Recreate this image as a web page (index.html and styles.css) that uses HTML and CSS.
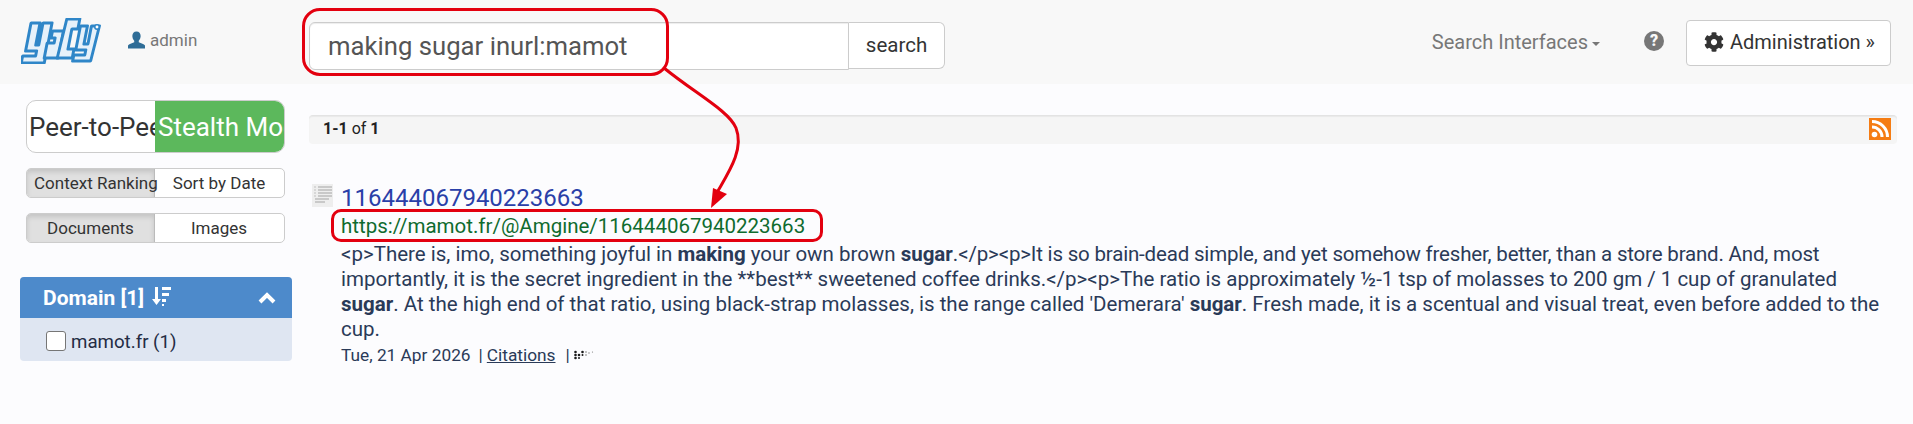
FILE: index.html
```html
<!DOCTYPE html>
<html lang="en">
<head>
<meta charset="utf-8">
<title>YaCy search</title>
<link rel="stylesheet" href="styles.css">
</head>
<body>
<header class="nav">
  <svg class="logo" viewBox="0 0 80 46" width="80" height="46">
    <g transform="skewX(-11) translate(9 0)" fill="#e6f1fa" stroke="#2f86c8" stroke-width="3" stroke-linejoin="round">
      <path d="M2 5h9v22h3V5h9v40H0v-7h13v-5H2z"/>
      <path d="M25 13h11v27H22V25h7v-5h-4z"/>
      <path d="M37 1h13v10h-6v20h6v9H35z"/>
      <path d="M52 8h7v18h4V8h8l-2 35H51v-6h11v-5H52z"/>
    </g>
    <circle cx="76" cy="9" r="2.200" fill="#fff" stroke="#2f86c8" stroke-width="1.500"/>
  </svg>
  <div class="user">
    <svg class="user-icon" viewBox="0 0 18 18" width="17" height="18"><path d="M9 0c2.800 0 4.400 2 4.400 4.800 0 2-.9 3.800-2 4.900v1.600c2.400.9 5.800 2 6.600 3.500V18H0v-3.200c.8-1.500 4.200-2.600 6.600-3.500V9.700c-1.100-1.100-2-2.900-2-4.900C4.600 2 6.200 0 9 0z"/></svg>
    <span>admin</span>
  </div>
  <form class="search">
    <input class="search-input" type="text" value="making sugar inurl:mamot">
    <button class="search-btn" type="button">search</button>
  </form>
  <div class="nav-right">
    <span class="interfaces">Search Interfaces<i class="caret"></i></span>
    <span class="help">?</span>
    <button class="admin-btn" type="button">
      <svg class="gear" viewBox="0 0 512 512" width="20" height="20"><path d="M487.400 315.700l-42.600-24.600c4.300-23.200 4.300-47 0-70.200l42.600-24.600c4.900-2.800 7.100-8.600 5.500-14-11.100-35.600-30-67.800-54.700-94.600-3.800-4.100-10-5.100-14.800-2.300L380.800 110c-17.900-15.400-38.500-27.300-60.800-35.100V25.800c0-5.600-3.900-10.500-9.400-11.700-36.700-8.200-74.300-7.800-109.200 0-5.500 1.200-9.400 6.100-9.400 11.700V75c-22.200 7.900-42.800 19.800-60.800 35.100L88.700 85.500c-4.900-2.800-11-1.900-14.800 2.300-24.700 26.700-43.600 58.900-54.700 94.600-1.700 5.400.6 11.200 5.500 14L67.300 221c-4.300 23.200-4.300 47 0 70.200l-42.600 24.600c-4.900 2.800-7.100 8.600-5.500 14 11.100 35.600 30 67.800 54.700 94.600 3.800 4.100 10 5.100 14.800 2.300l42.600-24.600c17.900 15.400 38.500 27.300 60.800 35.100v49.200c0 5.600 3.900 10.500 9.400 11.700 36.700 8.200 74.300 7.800 109.200 0 5.500-1.200 9.400-6.100 9.400-11.700v-49.200c22.200-7.900 42.800-19.800 60.800-35.100l42.600 24.600c4.900 2.800 11 1.900 14.800-2.300 24.700-26.700 43.600-58.900 54.700-94.600 1.500-5.500-.7-11.300-5.600-14.100zM256 336c-44.100 0-80-35.900-80-80s35.900-80 80-80 80 35.900 80 80-35.900 80-80 80z"/></svg>
      Administration »
    </button>
  </div>
</header>

<div class="page">
  <aside class="side">
    <div class="btn-group big">
      <span class="seg">Peer-to-Peer</span>
      <span class="seg green">Stealth Mode</span>
    </div>
    <div class="btn-group small">
      <span class="seg active ctx">Context Ranking</span>
      <span class="seg">Sort by Date</span>
    </div>
    <div class="btn-group small">
      <span class="seg active">Documents</span>
      <span class="seg">Images</span>
    </div>
    <section class="panel">
      <div class="panel-head">
        <span class="panel-title">Domain [1]</span>
        <svg class="sort" viewBox="0 0 20 20" width="20" height="20"><path d="M4 1h3v12h3l-4.500 6L1 13h3z"/><path d="M11 1h9v3h-9zM11 7h7v3h-7zM11 13h4v3h-4zM11 18h2v2h-2z"/></svg>
        <svg class="chev" viewBox="0 0 18 12" width="18" height="12"><path d="M2 10l7-7 7 7" fill="none" stroke="#fff" stroke-width="4"/></svg>
      </div>
      <label class="panel-body"><input class="check" type="checkbox"><span>mamot.fr (1)</span></label>
    </section>
  </aside>

  <main class="main">
    <div class="well">
      <span><b>1-1</b> of <b>1</b></span>
      <svg class="rss" viewBox="0 0 22 22" width="22" height="22"><rect width="22" height="22" fill="#f57c13"/><circle cx="5.500" cy="16.500" r="2.800" fill="#fff"/><path d="M3 9a10 10 0 0 1 10 10M3 3.500A15.500 15.500 0 0 1 18.500 19" fill="none" stroke="#fff" stroke-width="3"/></svg>
    </div>
    <article class="result">
      <svg class="fav" viewBox="0 0 21 23" width="21" height="23"><rect width="21" height="23" fill="#eeeeee"/><path d="M6 3h14M6 6h14M6 9h14M6 12h14M3 15h14M3 18h10" stroke="#bdbdbd" stroke-width="1.300"/><path d="M2 3h2M2 6h2M2 9h2M2 12h2" stroke="#d0d0d0" stroke-width="1.300"/></svg>
      <div class="result-body">
        <a class="title" href="#">116444067940223663</a>
        <div class="url">https://mamot.fr/@Amgine/116444067940223663</div>
        <p class="snippet">&lt;p&gt;There is, imo, something joyful in <b>making</b> your own brown <b>sugar</b>.<span class="tight">&lt;/p&gt;&lt;p&gt;It is so brain-dead simple, and yet somehow fresher, better, than a store brand. And, most</span><br>importantly, it is the secret ingredient in the **best** sweetened coffee drinks.&lt;/p&gt;&lt;p&gt;The ratio is approximately ½-1 tsp of molasses to 200 gm / 1 cup of granulated<br><b>sugar</b>. At the high end of that ratio, using black-strap molasses, is the range called 'Demerara' <b>sugar</b>. Fresh made, it is a scentual and visual treat, even before added to the<br>cup.</p>
        <div class="meta">
          <span>Tue, 21 Apr 2026</span>
          <span class="sep">|</span><a class="cit" href="#">Citations</a>
          <span class="sep2">|</span>
          <svg class="dots" viewBox="0 0 20 10" width="20" height="10"><g fill="#1a1a1a"><circle cx="1.500" cy="2" r="1.300"/><circle cx="1.500" cy="5" r="1.300"/><circle cx="1.500" cy="8" r="1.300"/><circle cx="5" cy="5" r="1.300"/><circle cx="5" cy="8" r="1"/><circle cx="8.500" cy="2" r="1.300"/><circle cx="8.500" cy="5" r="1"/></g><g fill="#777"><circle cx="12" cy="2" r=".8"/><circle cx="12" cy="5" r=".8"/><circle cx="15" cy="3" r=".7"/><circle cx="18.500" cy="2" r=".6"/></g></svg>
        </div>
      </div>
    </article>
  </main>
</div>

<div class="mark mark-search"></div>
<div class="mark mark-url"></div>
<svg class="arrow" viewBox="0 0 90 150" width="90" height="150">
  <path d="M3 2C35 28 68 45 75 62C84 85 65 110 54 130" fill="none" stroke="#e3000f" stroke-width="3"/>
  <path d="M50 142l2-20 14 6z" fill="#e3000f"/>
</svg>
</body>
</html>
```
FILE: styles.css
```css
* { box-sizing: border-box; }
html, body { margin: 0; padding: 0; }
body {
  width: 1913px;
  height: 424px;
  overflow: hidden;
  position: relative;
  background: #fcfcfe;
  color: #333;
  font-family: Roboto, "Liberation Sans", sans-serif;
  font-size: 16px;
}
.nav {
  display: flex;
  align-items: center;
  height: 84px;
  background: #f8f8f8;
  padding-left: 21px;
  padding-right: 22px;
}
.logo { flex: none; margin-top: -3px; }
.user {
  display: flex;
  align-items: center;
  gap: 5px;
  width: 68px;
  flex: none;
  margin-left: 27px;
  margin-top: -4px;
  color: #777;
  font-size: 17px;
}
.user-icon { fill: #2f6d97; flex: none; }
.search {
  display: flex;
  flex: none;
  margin-left: 113px;
  height: 48px;
  margin-top: 7px;
}
.search-input {
  width: 540px;
  height: 48px;
  border: 1px solid #ccc;
  border-radius: 6px 0 0 6px;
  background: #fff;
  padding: 0 18px;
  font: 25.700px Roboto, sans-serif;
  color: #555;
  box-shadow: inset 0 1px 1px rgba(0,0,0,.075);
  outline: none;
}
.search-btn {
  width: 96px;
  height: 47px;
  border: 1px solid #ccc;
  border-left: 0;
  border-radius: 0 6px 6px 0;
  background: #fff;
  font: 20.500px Roboto, sans-serif;
  color: #333;
}
.nav-right {
  display: flex;
  align-items: center;
  margin-left: auto;
}
.interfaces {
  display: flex;
  align-items: center;
  color: #777;
  font-size: 20px;
}
.caret {
  margin-left: 4px;
  margin-top: 3px;
  border-top: 4px solid #777;
  border-left: 4.500px solid transparent;
  border-right: 4.500px solid transparent;
}
.help {
  width: 20px;
  height: 20px;
  margin-left: 44px;
  border-radius: 50%;
  background: #777;
  color: #f8f8f8;
  font-size: 16px;
  font-weight: 900;
  line-height: 20px;
  text-align: center;
  margin-top: -2px;
}
.admin-btn {
  display: flex;
  align-items: center;
  gap: 6px;
  width: 205px;
  height: 46px;
  margin-left: 22px;
  margin-top: 1px;
  padding: 0 0 2px 17px;
  border: 1px solid #ccc;
  border-radius: 4px;
  background: #fff;
  color: #333;
  font: 20px Roboto, sans-serif;
}
.gear { fill: #333; flex: none; }

.page { display: flex; }
.side {
  width: 309px;
  flex: none;
  padding: 16px 0 0 26px;
}
.btn-group {
  display: flex;
  width: 259px;
  background: #fff;
  border: 1px solid #ccc;
  border-radius: 6px;
  overflow: hidden;
}
.btn-group.big { height: 53px; border-radius: 10px; font-size: 26px; }
.btn-group.small { height: 30px; margin-top: 15px; border-radius: 5px; font-size: 17px; }
.seg {
  flex: 0 0 128px;
  min-width: 0;
  overflow: hidden;
  white-space: nowrap;
  display: flex;
  align-items: center;
  justify-content: center;
  color: #333;
}
.big .seg { justify-content: flex-start; padding-left: 2px; }
.big .seg.green { background: #5cb85c; color: #fff; padding-left: 3px; margin: -1px -1px -1px 0; flex: 1 0 128px; }
.seg.active {
  background: #e0e0e0;
  box-shadow: inset 0 3px 5px rgba(0,0,0,.125);
  border-right: 1px solid #bbb;
  overflow: visible;
}
.seg.ctx { justify-content: flex-start; padding-left: 7px; position: relative; z-index: 1; }
.panel {
  width: 272px;
  margin: 34px 0 0 -6px;
  border-radius: 4px;
  overflow: hidden;
  background: #dfe6f2;
}
.panel-head {
  display: flex;
  align-items: center;
  height: 41px;
  padding: 0 16px 0 23px;
  background: #4d8acb;
  color: #fff;
}
.panel-title { font-size: 21px; font-weight: 700; }
.sort { fill: #fff; margin-left: 7px; margin-top: -3px; }
.chev { margin-left: auto; }
.panel-body {
  display: flex;
  align-items: center;
  height: 43px;
  padding: 5px 0 0 26px;
  font-size: 18.700px;
  color: #242c44;
}
.check {
  appearance: none;
  width: 20px;
  height: 20px;
  margin: -3px 5px 0 0;
  background: #fff;
  border: 1px solid #767676;
  border-radius: 3px;
}

.main { flex: 1; min-width: 0; padding: 31px 16px 0 0; }
.well {
  display: flex;
  align-items: center;
  justify-content: space-between;
  height: 29px;
  padding: 0 6px 3px 14px;
  background: #f5f5f5;
  border-top: 1px solid #e3e3e3;
  border-radius: 4px;
  box-shadow: inset 0 1px 1px rgba(0,0,0,.05);
  font-size: 16px;
  color: #222;
}
.rss { flex: none; margin-bottom: -1px; }
.result { display: flex; margin-top: 40px; padding-left: 3px; }
.fav { flex: none; }
.result-body { margin-left: 8px; min-width: 0; width: 1556px; }
.title {
  display: block;
  margin-top: 1px;
  height: 26px;
  line-height: 26px;
  font-size: 24px;
  color: #2a3fa8;
  text-decoration: none;
}
.url {
  margin-top: 3px;
  font-size: 20.500px;
  line-height: 25px;
  color: #0f6b2e;
}
.snippet {
  margin: 3px 0 0;
  font-size: 20.500px;
  line-height: 25px;
  color: #2a3a58;
  white-space: nowrap;
}
.tight { letter-spacing: -.18px; }
.meta {
  display: flex;
  align-items: center;
  height: 25px;
  font-size: 17.300px;
  color: #2a3a58;
}
.sep { margin-left: 8px; margin-right: 4px; }
.cit { color: #2a3a58; }
.sep2 { margin-left: 10px; margin-right: 4px; }
.dots { flex: none; }

.mark {
  position: absolute;
  border: 3px solid #e3000f;
  pointer-events: none;
}
.mark-search { left: 302px; top: 8px; width: 367px; height: 68px; border-radius: 18px; }
.mark-url { left: 331px; top: 209px; width: 492px; height: 33px; border-radius: 10px; }
.arrow { position: absolute; left: 661px; top: 66px; pointer-events: none; }
```
